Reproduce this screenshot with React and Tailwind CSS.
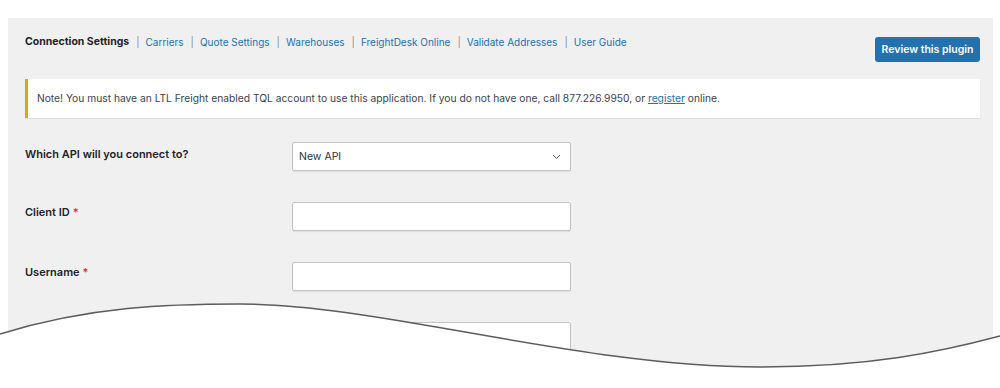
import React from "react";

const tabs = [
  "Carriers",
  "Quote Settings",
  "Warehouses",
  "FreightDesk Online",
  "Validate Addresses",
  "User Guide",
];

const fields = [
  { label: "Which API will you connect to?", type: "select" },
  { label: "Client ID", required: true },
  { label: "Username", required: true },
  { label: "Password", required: true },
];

const Field = ({ field }) => (
  <div className="flex h-[29px] items-start">
    <div
      className={`w-[267px] text-[11px] leading-[13px] font-semibold text-[#1d2327] ${
        field.type === "select" ? "pt-[6px]" : "pt-[4px]"
      }`}
    >
      {field.label}
      {field.required && <span className="ml-[3px] text-[#d63638]">*</span>}
    </div>
    {field.type === "select" ? (
      <div className="flex h-[29px] w-[279px] items-center justify-between rounded-[2px] border border-[#c3c4c7] bg-white pl-[6px] pr-[9px] text-[10.5px] text-[#2c3338] shadow-[0_1px_1px_rgba(0,0,0,0.08)]">
        <span>New API</span>
        <svg width="9" height="6" viewBox="0 0 9 6" fill="none">
          <polyline points="1,1 4.5,4.5 8,1" stroke="#50575e" strokeWidth="1" />
        </svg>
      </div>
    ) : (
      <div className="h-[29px] w-[279px] rounded-[2px] border border-[#c3c4c7] bg-white shadow-[0_1px_1px_rgba(0,0,0,0.08)]" />
    )}
  </div>
);

export default function App() {
  return (
    <div
      className="relative h-[388px] w-[1000px] overflow-hidden bg-white"
      style={{ fontFamily: "Inter, 'Liberation Sans', sans-serif" }}
    >
      <div className="ml-2 mt-[18px] h-[370px] w-[985px] bg-[#f0f0f1] pl-[17px] pr-[13px]">
        <div className="flex items-start justify-between">
          <nav className="flex items-center pt-[17px] text-[10px] leading-[14px]">
            <span className="text-[10.5px] font-bold text-[#1d2327]">Connection Settings</span>
            {tabs.map((tab) => (
              <React.Fragment key={tab}>
                <span className="ml-[7px] mr-[6px] text-[#8c8f94]">|</span>
                <a className="text-[#2271b1]">{tab}</a>
              </React.Fragment>
            ))}
          </nav>
          <button className="mt-[19px] h-[25px] w-[105px] rounded-[3px] bg-[#2271b1] text-[10.5px] font-semibold text-white">
            Review this plugin
          </button>
        </div>

        <div className="mt-[17px] flex h-[39px] items-center border-l-[3px] border-[#dba617] bg-white pl-[9px] text-[10.25px] text-[#3c434a] shadow-[0_1px_1px_rgba(0,0,0,0.06)]">
          <p>
            Note! You must have an LTL Freight enabled TQL account to use this
            application. If you do not have one, call 877.226.9950, or{" "}
            <a className="text-[#2271b1] underline">register</a> online.
          </p>
        </div>

        <div className="mt-[24px] flex flex-col gap-[31px]">
          {fields.map((f) => (
            <Field key={f.label} field={f} />
          ))}
        </div>
      </div>

      <svg
        className="absolute left-0 top-0"
        width="1000"
        height="388"
        viewBox="0 0 1000 388"
      >
        <path
          d="M0,334 C90,306 170,304 240,304 C380,304 580,367 760,367 C870,367 940,352 1000,336 L1000,388 L0,388 Z"
          fill="#ffffff"
        />
        <path
          d="M0,334 C90,306 170,304 240,304 C380,304 580,367 760,367 C870,367 940,352 1000,336"
          fill="none"
          stroke="#5c5c5c"
          strokeWidth="1.4"
        />
      </svg>
    </div>
  );
}
